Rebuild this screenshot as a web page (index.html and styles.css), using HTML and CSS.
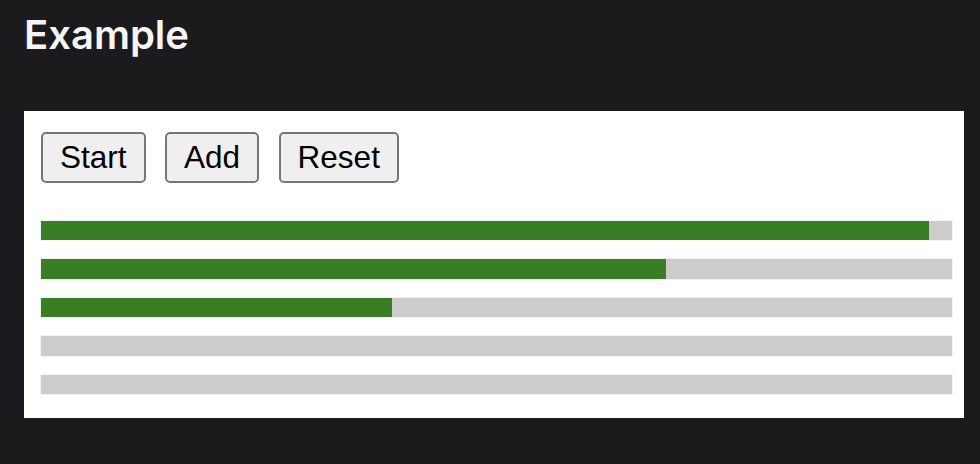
FILE: index.html
```html
<!DOCTYPE html>
<html lang="en">
<head>
<meta charset="utf-8">
<title>Example</title>
<link rel="stylesheet" href="styles.css">
</head>
<body>
<h1 class="title">Example</h1>
<div class="panel">
  <div class="controls">
    <button class="btn">Start</button>
    <button class="btn">Add</button>
    <button class="btn">Reset</button>
  </div>
  <div class="bars">
    <div class="bar"><div class="fill" style="width:97.5%"></div></div>
    <div class="bar"><div class="fill" style="width:68.6%"></div></div>
    <div class="bar"><div class="fill" style="width:38.5%"></div></div>
    <div class="bar"><div class="fill" style="width:0%"></div></div>
    <div class="bar"><div class="fill" style="width:0%"></div></div>
  </div>
</div>
</body>
</html>
```
FILE: styles.css
```css
html, body {
  margin: 0;
  background: #1b1b1d;
}
body {
  padding: 10.5px 16px 0 24px;
  font-family: Inter, "Noto Sans", sans-serif;
}
.title {
  margin: 0 0 52.5px 0;
  font-size: 40px;
  line-height: 48px;
  font-weight: 600;
  color: #f5f5f5;
}
.panel {
  background: #ffffff;
  padding: 21px 12px 24px 17px;
}
.controls {
  display: flex;
  gap: 19.5px;
}
.btn {
  font-family: "Liberation Sans", Arial, sans-serif;
  font-size: 31.5px;
  color: #000;
  background: #efefef;
  border: 2px solid #767676;
  border-radius: 5px;
  padding: 5px 17px;
  margin: 0;
}
.bars {
  margin-top: 38px;
  display: flex;
  flex-direction: column;
  gap: 19.3px;
}
.bar {
  height: 19.2px;
  background: #cccccc;
  box-shadow: 0 0 0 0.5px #e6e6e6;
}
.fill {
  height: 100%;
  background: #3a7e23;
}
```
